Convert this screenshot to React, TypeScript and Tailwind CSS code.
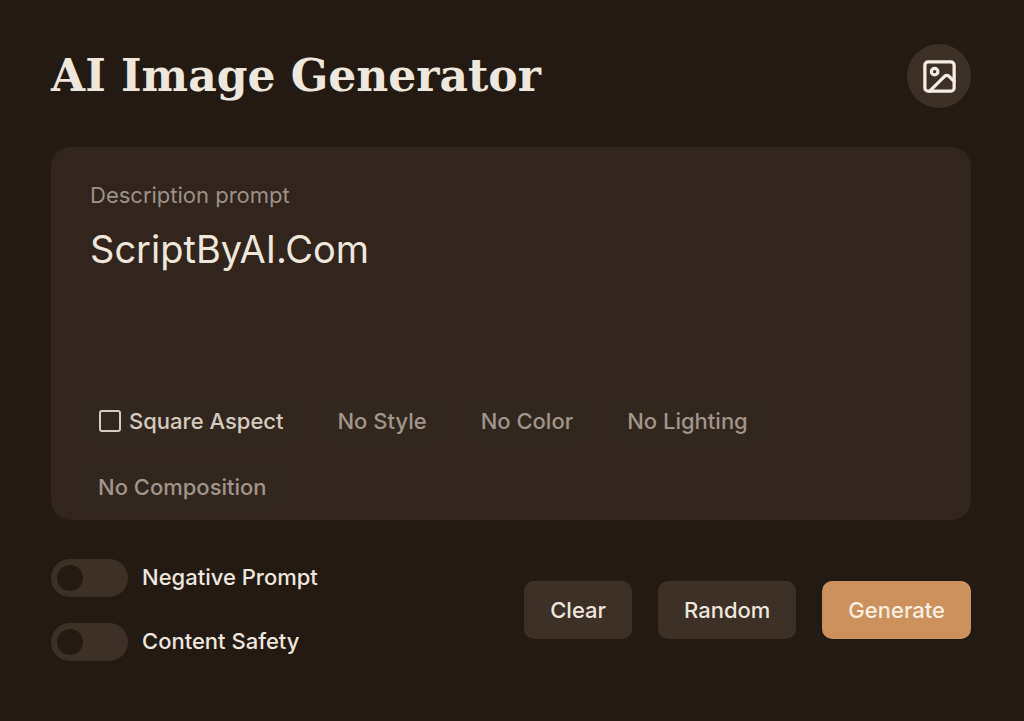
import { useState } from "react";
import { Image } from "lucide-react";

const filters = [
  { label: "Style", options: ["No Style", "Photo", "Anime", "Watercolor"] },
  { label: "Color", options: ["No Color", "Warm", "Cool", "Pastel"] },
  { label: "Lighting", options: ["No Lighting", "Studio", "Backlight", "Golden Hour"] },
  { label: "Composition", options: ["No Composition", "Close-up", "Wide Angle", "Macro"] },
];

function Toggle({ id, label }: { id: string; label: string }) {
  return (
    <div className="flex items-start gap-3.5">
      <input
        id={id}
        type="checkbox"
        role="switch"
        className="h-[38px] w-[77px] shrink-0 cursor-pointer appearance-none rounded-full bg-[#3c3027] p-1.5 before:block before:size-[26px] before:rounded-full before:bg-[#231a12] checked:bg-[#cc915c] checked:before:ml-auto"
      />
      <label htmlFor={id} className="text-[22px] leading-9 font-medium">{label}</label>
    </div>
  );
}

function App() {
  const [prompt, setPrompt] = useState("ScriptByAI.Com");

  return (
    <main className="min-h-screen bg-[#231a14] pt-11 pr-[53px] pb-[60px] pl-[51px] font-['Inter',sans-serif] text-[#eee7dd]">
      {/* Header */}
      <header className="flex items-center justify-between">
        <h1 className="font-['DejaVu_Serif',serif] text-[44px] leading-[64px] font-bold">
          AI Image Generator
        </h1>
        <button
          aria-label="Gallery"
          className="flex size-16 items-center justify-center rounded-full bg-[#3c3027] text-[#f6ede4]"
        >
          <Image size={39} />
        </button>
      </header>

      {/* Prompt card */}
      <section className="mt-[39px] rounded-[20px] bg-[#31251d] px-[31px] pt-8 pb-2.5">
        <label htmlFor="prompt" className="block px-2 text-[22px] leading-8 text-[#9c9188]">
          Description prompt
        </label>
        <textarea
          id="prompt"
          value={prompt}
          onChange={(e) => setPrompt(e.target.value)}
          className="mt-3 block h-[175px] w-full resize-none bg-transparent px-2 text-[38px] leading-[52px] outline-none"
        />

        <div className="flex flex-wrap gap-x-[22px] gap-y-5">
          <label className="flex h-[46px] items-center gap-2 rounded-lg bg-[#32271f] px-4 text-[22px] font-medium text-[#d5cbc0]">
            <input
              type="checkbox"
              className="ml-px size-[22px] appearance-none rounded-[3px] border-2 border-[#d5cbc0] checked:bg-[#cc915c]"
            />
            Square Aspect
          </label>
          {filters.map((filter) => (
            <select
              key={filter.label}
              aria-label={filter.label}
              className="field-sizing-content h-[46px] appearance-none rounded-lg bg-[#32271f] px-4 text-[22px] font-medium text-[#a0958b]"
            >
              {filter.options.map((option) => (
                <option key={option}>{option}</option>
              ))}
            </select>
          ))}
        </div>
      </section>

      {/* Footer */}
      <footer className="mt-[39px] flex items-center justify-between">
        <div className="flex flex-col gap-[26px]">
          <Toggle id="negative" label="Negative Prompt" />
          <Toggle id="safety" label="Content Safety" />
        </div>
        <div className="flex gap-[26px] text-[22px] font-medium">
          <button className="h-[58px] rounded-[10px] bg-[#3c3027] px-[26px]">Clear</button>
          <button className="h-[58px] rounded-[10px] bg-[#3c3027] px-[26px]">Random</button>
          <button className="h-[58px] rounded-[10px] bg-[#cc915c] px-[26px] text-[#fbf0e2]">Generate</button>
        </div>
      </footer>
    </main>
  );
}

export default App;
